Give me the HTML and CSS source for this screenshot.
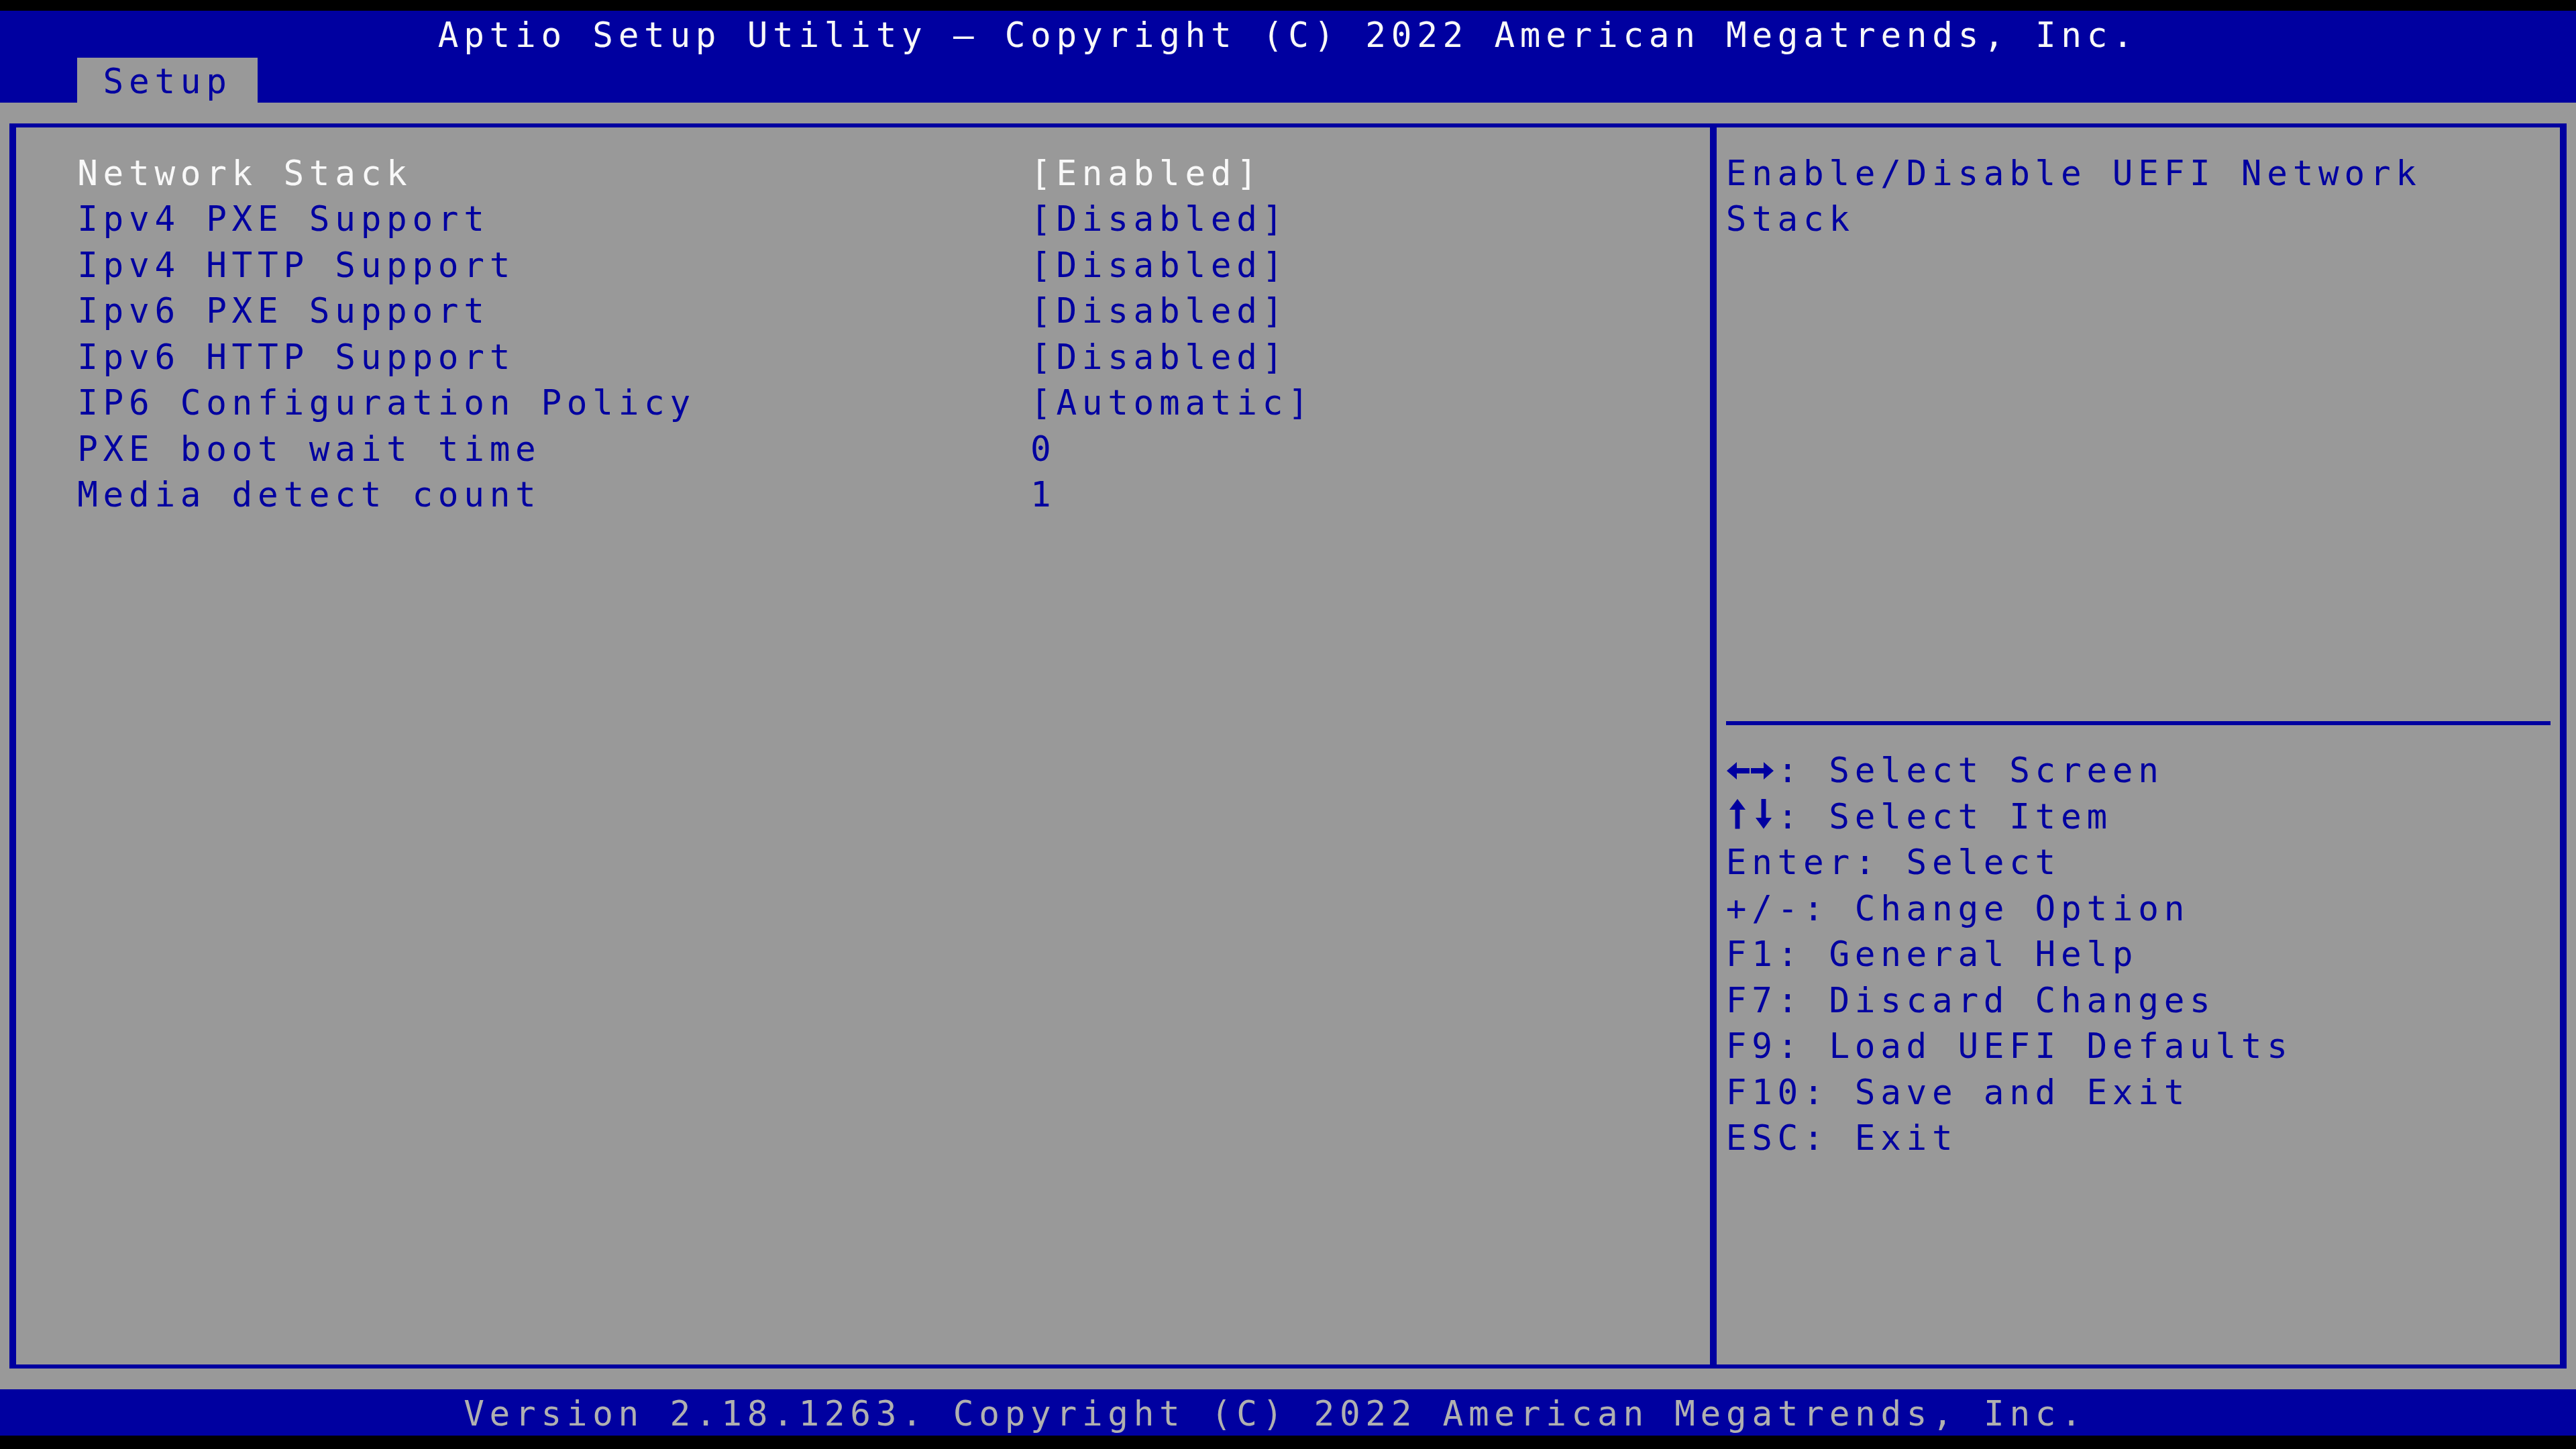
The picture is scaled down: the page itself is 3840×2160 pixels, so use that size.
FILE: index.html
```html
<!DOCTYPE html>
<html lang="en">
<head>
<meta charset="utf-8">
<title>Aptio Setup Utility</title>
<link rel="stylesheet" href="styles.css">
</head>
<body>
<div class="screen">
  <header class="topbar">
    <div class="ln title">Aptio Setup Utility – Copyright (C) 2022 American Megatrends, Inc.</div>
    <nav class="tabs">
      <div class="ln tab">Setup</div>
    </nav>
  </header>

  <main class="workspace">
    <div class="frame">
      <section class="settings">
        <div class="ln item selected"><span class="label">Network Stack</span><span class="value">[Enabled]</span></div>
        <div class="ln item"><span class="label">Ipv4 PXE Support</span><span class="value">[Disabled]</span></div>
        <div class="ln item"><span class="label">Ipv4 HTTP Support</span><span class="value">[Disabled]</span></div>
        <div class="ln item"><span class="label">Ipv6 PXE Support</span><span class="value">[Disabled]</span></div>
        <div class="ln item"><span class="label">Ipv6 HTTP Support</span><span class="value">[Disabled]</span></div>
        <div class="ln item"><span class="label">IP6 Configuration Policy</span><span class="value">[Automatic]</span></div>
        <div class="ln item"><span class="label">PXE boot wait time</span><span class="value">0</span></div>
        <div class="ln item"><span class="label">Media detect count</span><span class="value">1</span></div>
      </section>

      <aside class="help">
        <div class="desc">
          <div class="ln">Enable/Disable UEFI Network</div>
          <div class="ln">Stack</div>
        </div>
        <div class="sep"><div class="sep-line"></div></div>
        <div class="keys">
          <div class="ln"><svg class="arrows" viewBox="0 0 76.8 62.5" width="76.8" height="62.5" aria-hidden="true"><polygon points="1,31 16,18 16,44"/><rect x="15" y="27" width="20" height="8"/><rect x="37" y="27" width="20" height="8"/><polygon points="56,18 71,31 56,44"/></svg>: Select Screen</div>
          <div class="ln"><svg class="arrows" viewBox="0 0 76.8 62.5" width="76.8" height="62.5" aria-hidden="true"><polygon points="17,4 5,20 29,20"/><rect x="13.5" y="19" width="7" height="29.5"/><rect x="52.5" y="4" width="7" height="29"/><polygon points="44,32 68,32 56,48.5"/></svg>: Select Item</div>
          <div class="ln">Enter: Select</div>
          <div class="ln">+/-: Change Option</div>
          <div class="ln">F1: General Help</div>
          <div class="ln">F7: Discard Changes</div>
          <div class="ln">F9: Load UEFI Defaults</div>
          <div class="ln">F10: Save and Exit</div>
          <div class="ln">ESC: Exit</div>
        </div>
      </aside>
    </div>
  </main>

  <footer class="ln footer">Version 2.18.1263. Copyright (C) 2022 American Megatrends, Inc.</footer>
</div>
</body>
</html>
```

FILE: styles.css
```css
/* Text-mode setup screen: 100 columns x 31 rows of 38.4 x 68.5 px cells */
:root {
  --cw: 38.4px;
  --rh: 68.5px;
  --blue: #0000a0;
  --grey: #999999;
  --white: #f8f8f8;
  --dim: #b0b0b0;
  --hline: 6px;
  --vline: 10px;
}

html, body {
  margin: 0;
  padding: 0;
  background: #000;
}

body {
  width: 3840px;
  height: 2160px;
  overflow: hidden;
  padding-top: 16px;
  box-sizing: border-box;
  font-family: "DejaVu Sans Mono", "Liberation Mono", monospace;
  font-size: 51px;
  letter-spacing: 7.7px;
}

.screen {
  width: 3840px;
  display: flex;
  flex-direction: column;
}

/* one character row */
.ln {
  height: var(--rh);
  line-height: 62.5px;
  padding-top: 6px;
  box-sizing: border-box;
  white-space: pre;
}

/* title + tab rows */
.topbar {
  background: var(--blue);
  display: flex;
  flex-direction: column;
}

.title {
  color: var(--white);
  padding-left: calc(17 * var(--cw));
}

.tabs {
  display: flex;
  padding-left: calc(3 * var(--cw));
}

.tab {
  background: var(--grey);
  color: var(--blue);
  width: calc(7 * var(--cw));
  padding-left: var(--cw);
  height: 67px;
  margin-top: 1.5px;
  padding-top: 4.5px;
}

/* grey work area holding the boxed panes */
.workspace {
  background: var(--grey);
  height: calc(28 * var(--rh));
  padding: 31.25px 14.2px;
  box-sizing: border-box;
}

.frame {
  height: 100%;
  box-sizing: border-box;
  border-style: solid;
  border-color: var(--blue);
  border-width: var(--hline) var(--vline);
  display: grid;
  grid-template-columns: 2534.4px 1fr;
}

.settings {
  border-right: var(--vline) solid var(--blue);
  padding-top: 31.25px;
  padding-left: 91px;
  color: var(--blue);
}

.item {
  display: flex;
}

.item .label {
  width: calc(37 * var(--cw));
  flex: none;
}

.item.selected {
  color: var(--white);
}

.help {
  padding: 31.25px 14.2px 0;
  color: var(--blue);
  display: flex;
  flex-direction: column;
}

.desc {
  height: calc(12 * var(--rh));
}

.sep {
  height: var(--rh);
  display: flex;
  align-items: center;
}

.sep-line {
  width: 100%;
  height: var(--hline);
  background: var(--blue);
}

.arrows {
  display: inline-block;
  vertical-align: top;
  fill: var(--blue);
}

.footer {
  background: var(--blue);
  color: var(--dim);
  padding-left: calc(18 * var(--cw));
}
```
